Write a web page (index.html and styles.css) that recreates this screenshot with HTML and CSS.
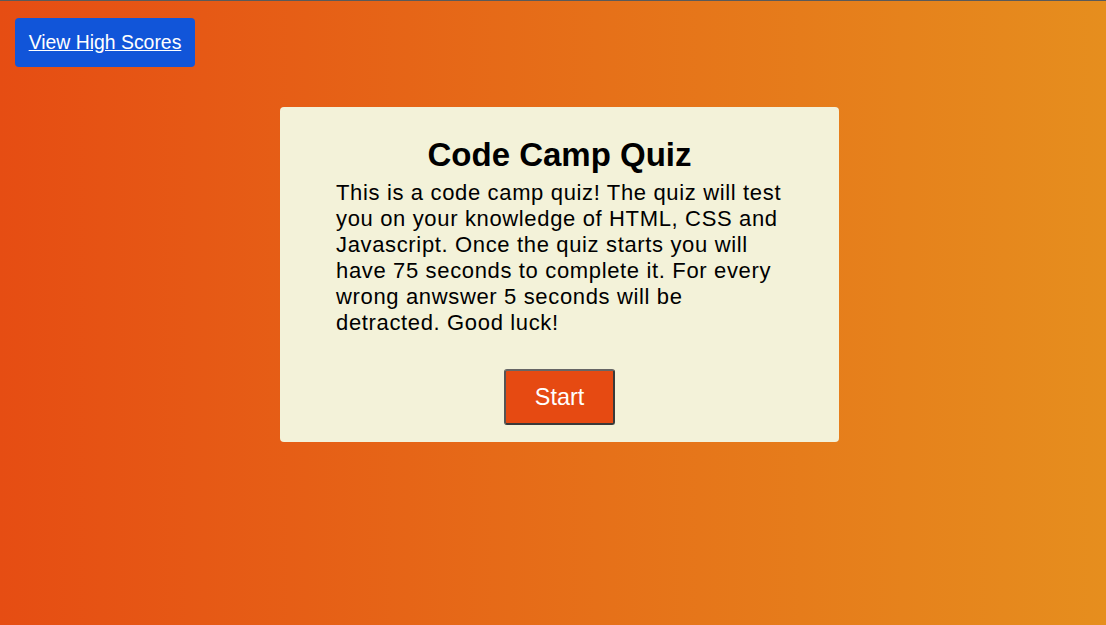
FILE: index.html
```html
<!DOCTYPE html>
<html lang="en">
<head>
<meta charset="utf-8">
<title>Code Camp Quiz</title>
<link rel="stylesheet" href="styles.css">
</head>
<body>
<header class="top">
  <a class="scores-btn" href="#">View High Scores</a>
</header>
<main class="stage">
  <section class="card">
    <h1 class="title">Code Camp Quiz</h1>
    <p class="intro">This is a code camp quiz! The quiz will test you on your knowledge of HTML, CSS and Javascript. Once the quiz starts you will have 75 seconds to complete it. For every wrong anwswer 5 seconds will be detracted. Good luck!</p>
    <button class="start-btn" type="button">Start</button>
  </section>
</main>
</body>
</html>
```
FILE: styles.css
```css
html, body {
  margin: 0;
  padding: 0;
  height: 100%;
}
body {
  font-family: "Liberation Sans", Arial, sans-serif;
  background: linear-gradient(to right, #e64d13, #e68e1e);
  border-top: 1px solid #5a5a5a;
  box-sizing: border-box;
  color: #000;
}
.top {
  padding: 17px 0 0 15px;
}
.scores-btn {
  display: inline-block;
  box-sizing: border-box;
  width: 180px;
  height: 49px;
  background: #1155d9;
  color: #fff;
  font-size: 19.4px;
  text-decoration: underline;
  text-align: center;
  line-height: 49px;
  border-radius: 4px;
}
.stage {
  display: flex;
  justify-content: center;
  padding: 40px 0 0 13px;
}
.card {
  width: 559px;
  box-sizing: border-box;
  background: #f3f2d9;
  border-radius: 4px;
  padding: 29px 56px 17px 56px;
  display: flex;
  flex-direction: column;
  align-items: center;
}
.title {
  margin: 0;
  font-size: 33px;
  font-weight: bold;
  line-height: 38px;
}
.intro {
  margin: 6px 0 0 0;
  font-size: 22px;
  letter-spacing: 0.65px;
  line-height: 26px;
  align-self: stretch;
}
.start-btn {
  margin-top: 33px;
  font-family: "Liberation Sans", Arial, sans-serif;
  font-size: 23.4px;
  color: #fff;
  background: #e64a12;
  border: 2px solid #3a3a3a;
  border-top-color: #666;
  border-left-color: #555;
  border-radius: 3px;
  width: 111px;
  height: 56px;
  padding: 0;
  cursor: pointer;
}
```
